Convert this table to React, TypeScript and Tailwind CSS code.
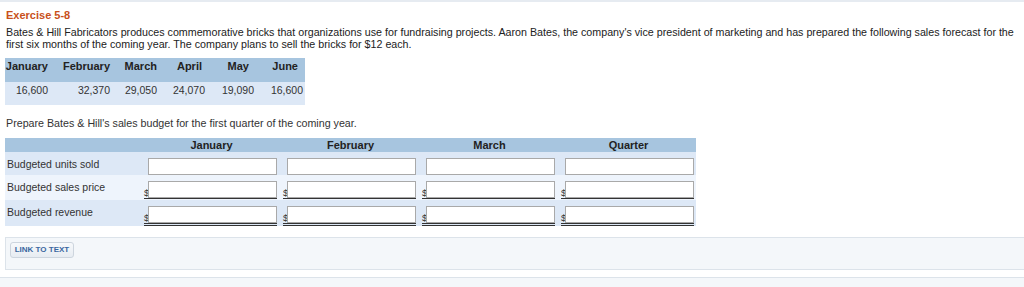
import React from "react";

const forecast = [
  { m: "January", v: "16,600", w: "w-[45px]", hp: "pr-[2px]" },
  { m: "February", v: "32,370", w: "w-[62px]", hp: "pr-[2px]" },
  { m: "March", v: "29,050", w: "w-[47px]", hp: "pr-[2px]" },
  { m: "April", v: "24,070", w: "w-[48px]", hp: "pr-[5px]" },
  { m: "May", v: "19,090", w: "w-[49px]", hp: "pr-[7px]" },
  { m: "June", v: "16,600", w: "w-[49px]", hp: "pr-[7px]" },
];

const cols = ["January", "February", "March", "Quarter"];

function InputCell({ kind }: { kind: "plain" | "single" | "double" }) {
  const wrap =
    kind === "single"
      ? "border-b border-[#333]"
      : kind === "double"
      ? "border-b-[3px] border-double border-[#333]"
      : "";
  return (
    <div className="w-[139px] pl-[4px]">
      <div className={`flex w-[133px] items-end ${wrap}`}>
        <span className="w-[4px] overflow-visible whitespace-nowrap text-[9.5px] leading-[10px] text-[#333]">
          {kind === "plain" ? "" : "$"}
        </span>
        <div className="h-[17px] w-[129px] border border-[#a9a9a9] bg-white" />
      </div>
    </div>
  );
}

function Row({
  label,
  kind,
  bg,
  pb,
}: {
  label: string;
  kind: "plain" | "single" | "double";
  bg: string;
  pb: string;
}) {
  return (
    <div className={`flex pt-[6px] ${pb} ${bg}`}>
      <div className="w-[135px] pl-[2px] text-[10.5px] leading-[12px] text-[#333]">{label}</div>
      {cols.map((c) => (
        <InputCell key={c} kind={kind} />
      ))}
    </div>
  );
}

export default function App() {
  return (
    <div className="min-h-[287px] border-t-2 border-[#e6ebf1] bg-white font-['Liberation_Sans',Arial,sans-serif] text-[10.7px] text-[#222]">
      <div className="pl-[5px] pt-[6px]">
        <div className="pl-px text-[11px] font-bold leading-[14px] text-[#c8501a]">Exercise 5-8</div>
        <p className="mt-[4px] pl-px leading-[12px]">
          <span className="whitespace-nowrap">
            Bates &amp; Hill Fabricators produces commemorative bricks that organizations use for fundraising projects.
            Aaron Bates, the company&apos;s vice president of marketing and has prepared the following sales forecast
            for the
          </span>
          <br />
          first six months of the coming year. The company plans to sell the bricks for $12 each.
        </p>

        <div className="mt-[8px] flex w-[300px]">
          {forecast.map((f) => (
            <div key={f.m} className={`${f.w} flex flex-col`}>
              <div className={`h-[24px] bg-[#a7c5df] pt-[2px] text-right text-[11px] font-bold leading-[13px] text-[#222] ${f.hp}`}>
                {f.m}
              </div>
              <div className="h-[23px] bg-[#dde8f6] pr-[2px] pt-[2px] text-right text-[10.5px] leading-[13px] text-[#333]">
                {f.v}
              </div>
            </div>
          ))}
        </div>

        <p className="mt-[12px] pl-px leading-[12px] text-[#333]">
          Prepare Bates &amp; Hill&apos;s sales budget for the first quarter of the coming year.
        </p>

        <div className="mt-[9px] w-[691px]">
          <div className="flex h-[14px] bg-[#a7c5df] text-[11px] font-bold leading-[14px] text-[#222]">
            <div className="w-[135px]" />
            {cols.map((c) => (
              <div key={c} className="w-[139px] pl-[4px] text-center">
                {c}
              </div>
            ))}
          </div>
          <Row label="Budgeted units sold" kind="plain" bg="bg-[#dde8f6]" pb="pb-0" />
          <Row label="Budgeted sales price" kind="single" bg="bg-[#eef4fc]" pb="pb-px" />
          <Row label="Budgeted revenue" kind="double" bg="bg-[#dde8f6]" pb="pb-0" />
        </div>
      </div>

      <div className="ml-[5px] mt-[11px] h-[33px] border border-r-0 border-[#dce3ea] bg-[#f4f7fa] pl-[4px] pt-[4px]">
        <button className="flex h-[16px] w-[64px] items-center justify-center rounded-[3px] border border-[#cdd5de] bg-gradient-to-b from-[#f7f9fb] to-[#e7ecf2] text-[8px] font-bold text-[#3a67a0]">
          LINK TO TEXT
        </button>
      </div>

      <div className="mt-[7px] h-[10px] border-t border-[#dce3ea] bg-[#f4f7fa]" />
    </div>
  );
}
